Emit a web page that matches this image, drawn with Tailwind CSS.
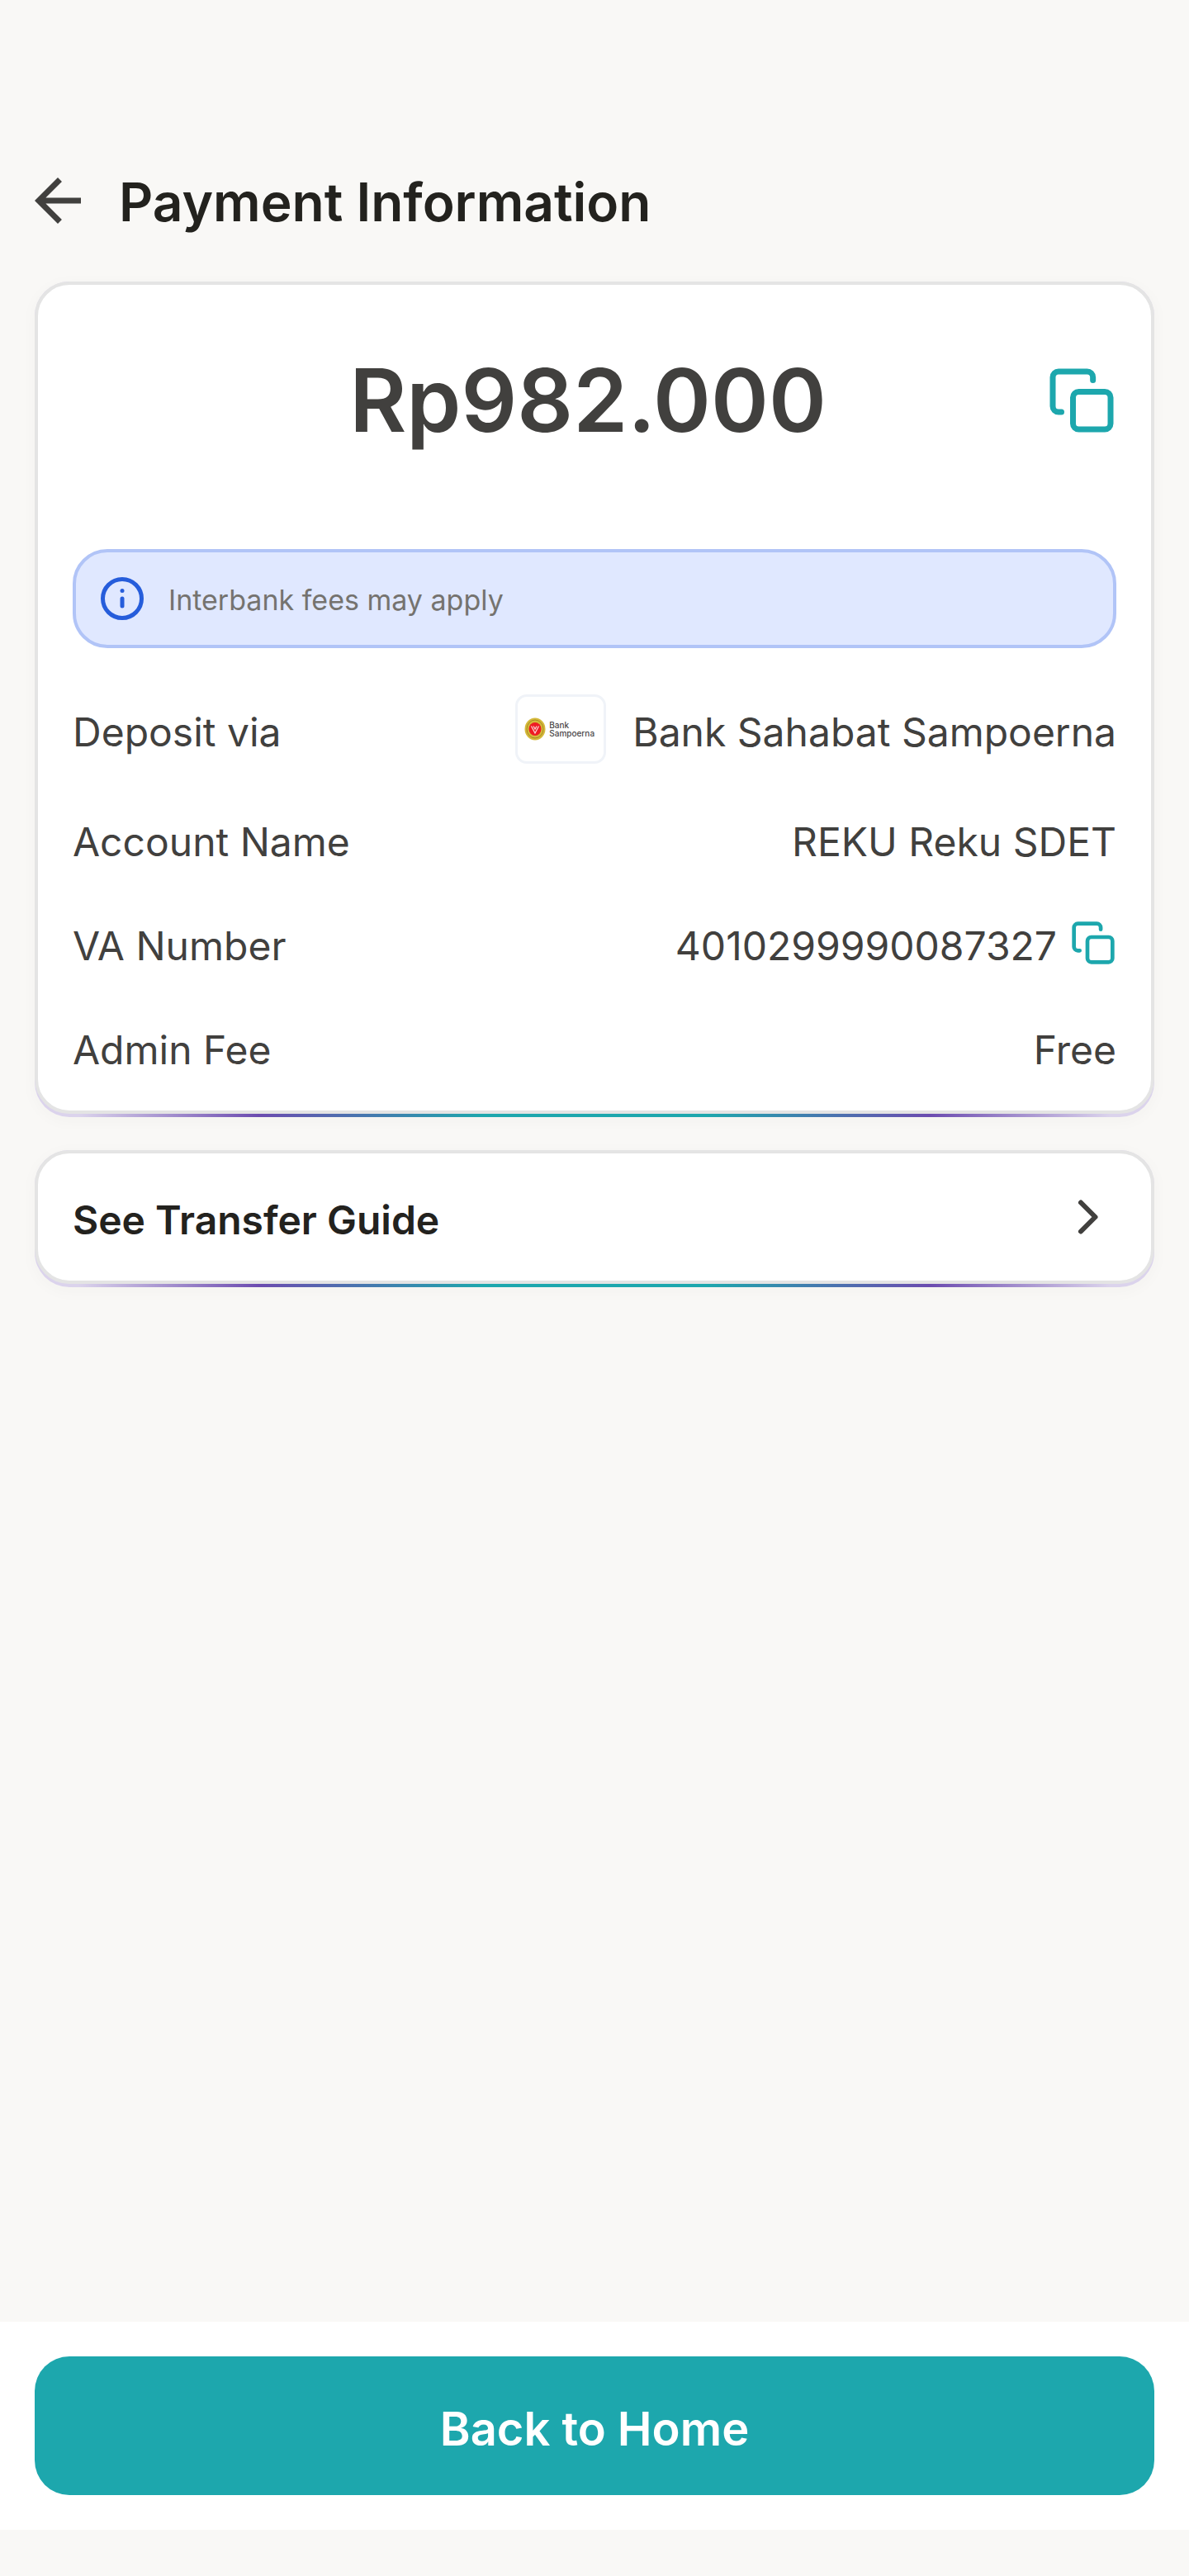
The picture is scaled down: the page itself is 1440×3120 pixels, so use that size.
<!DOCTYPE html>
<html lang="en">
<head>
<meta charset="utf-8">
<meta name="viewport" content="width=device-width, initial-scale=1">
<title>Payment Information</title>
<script src="https://cdn.jsdelivr.net/npm/@tailwindcss/browser@4"></script>
</head>
<body class="flex min-h-screen flex-col bg-[#f9f8f6] font-['Inter',sans-serif] text-[#41403e]">
  <header class="flex items-center gap-8 px-7 pt-[201px]">
    <button type="button" aria-label="Back" class="shrink-0">
      <svg class="size-[84px]" viewBox="0 0 24 24" fill="currentColor" aria-hidden="true"><path d="M20 11H7.83l5.59-5.59L12 4l-8 8 8 8 1.41-1.41L7.83 13H20v-2z"/></svg>
    </button>
    <h1 class="pt-1 text-[64px] leading-[80px] font-semibold text-[#23221e]">Payment Information</h1>
  </header>

  <main class="flex flex-1 flex-col gap-10 px-[42px] pt-14 pb-14">
    <section class="rounded-[42px] bg-[linear-gradient(90deg,#dbd3ec_0%,#dbd3ec_4%,#6c4cb0_20%,#1da7ad_40%,#1da7ad_60%,#6c4cb0_80%,#dbd3ec_96%,#dbd3ec_100%)] pb-1 shadow-[0_4px_20px_rgba(60,50,40,0.03)]">
      <div class="rounded-[42px] border-4 border-[#e4e4e4] bg-white px-[42px] pt-14 pb-[42px]">
        <div class="grid h-[168px] grid-cols-[1fr_auto_1fr] items-center">
          <p class="col-start-2 pr-4 text-[106px] leading-[120px] font-semibold">Rp982.000</p>
          <button type="button" aria-label="Copy amount" class="justify-self-end text-[#1da7ad]">
            <svg class="size-[84px]" viewBox="0 0 24 24" fill="none" stroke="currentColor" stroke-width="2" stroke-linecap="round" stroke-linejoin="round" aria-hidden="true"><path d="M5 16H4c-1.100 0-2-.9-2-2V4c0-1.100.9-2 2-2h9.900c1.100 0 2 .9 2 2v1"/><rect x="9" y="9" width="13" height="13" rx="2"/></svg>
          </button>
        </div>

        <div class="mt-24 flex h-[120px] items-center gap-7 rounded-[42px] border-4 border-[#b1c4f7] bg-[#e0e8ff] px-7">
          <svg class="size-14 shrink-0" viewBox="0 0 56 56" fill="none" stroke="#265ddb" stroke-width="5" stroke-linecap="round" aria-hidden="true"><circle cx="28" cy="28" r="23.500"/><path d="M28 28v9"/><circle cx="28" cy="18.500" r="2.500" fill="#265ddb" stroke="none"/></svg>
          <p class="pt-1 text-[34px] leading-[48px] text-[#75736f]">Interbank fees may apply</p>
        </div>

        <dl class="mt-14 flex flex-col gap-14 text-[48px] leading-[60px]">
          <div class="flex h-[84px] items-center justify-between">
            <dt class="pt-2">Deposit via</dt>
            <dd class="flex items-center gap-8">
              <span class="flex h-[84px] w-[110px] items-center gap-1 rounded-[14px] border-[3px] border-[#f0f3f8] pl-2">
                <svg class="h-7 w-[26px] shrink-0" viewBox="0 0 26 28" fill="none" aria-hidden="true">
                  <ellipse cx="13" cy="14" rx="12.500" ry="13.500" fill="#d5b93a"/>
                  <ellipse cx="13" cy="14" rx="10" ry="11" stroke="#a58c25" stroke-width="1"/>
                  <ellipse cx="13" cy="14" rx="7.500" ry="8" fill="#ee1c24"/>
                  <path d="M8.500 10.500 13 19l4.500-8.500M11 10.500l2 3.500 2-3.500" stroke="#fbd9d9" stroke-width="1.200"/>
                </svg>
                <span class="flex flex-col text-[10px] leading-[10px] font-medium text-[#4a4648]"><span>Bank</span><span>Sampoerna</span></span>
              </span>
              <span class="pt-2">Bank Sahabat Sampoerna</span>
            </dd>
          </div>
          <div class="flex h-[70px] items-center justify-between">
            <dt class="pt-2">Account Name</dt>
            <dd class="pt-2">REKU Reku SDET</dd>
          </div>
          <div class="flex h-[70px] items-center justify-between">
            <dt class="pt-2">VA Number</dt>
            <dd class="flex items-center gap-4">
              <span class="pt-2">4010299990087327</span>
              <button type="button" aria-label="Copy VA number" class="text-[#1da7ad]">
                <svg class="size-14" viewBox="0 0 24 24" fill="none" stroke="currentColor" stroke-width="2" stroke-linecap="round" stroke-linejoin="round" aria-hidden="true"><path d="M5 16H4c-1.100 0-2-.9-2-2V4c0-1.100.9-2 2-2h9.900c1.100 0 2 .9 2 2v1"/><rect x="9" y="9" width="13" height="13" rx="2"/></svg>
              </button>
            </dd>
          </div>
          <div class="flex h-[70px] items-center justify-between">
            <dt class="pt-2">Admin Fee</dt>
            <dd class="pt-2">Free</dd>
          </div>
        </dl>
      </div>
    </section>

    <section class="rounded-[42px] bg-[linear-gradient(90deg,#dbd3ec_0%,#dbd3ec_4%,#6c4cb0_20%,#1da7ad_40%,#1da7ad_60%,#6c4cb0_80%,#dbd3ec_96%,#dbd3ec_100%)] pb-1 shadow-[0_4px_20px_rgba(60,50,40,0.03)]">
      <button type="button" class="flex h-[162px] w-full items-center justify-between rounded-[42px] border-4 border-[#e4e4e4] bg-white px-[42px] text-[#23221e]">
        <span class="pt-2 text-[48px] leading-[60px] font-semibold">See Transfer Guide</span>
        <svg class="size-[70px] text-[#41403e]" viewBox="0 0 70 70" fill="none" stroke="currentColor" stroke-width="6" stroke-linecap="round" stroke-linejoin="round" aria-hidden="true"><path d="m27 17.500 17.500 17.500L27 52.500"/></svg>
      </button>
    </section>
  </main>

  <footer class="mb-14 bg-white p-[42px]">
    <button type="button" class="h-[168px] w-full rounded-[42px] bg-[#1da7ad] pt-2 text-[56px] leading-[70px] font-semibold text-white">Back to Home</button>
  </footer>
</body>
</html>
